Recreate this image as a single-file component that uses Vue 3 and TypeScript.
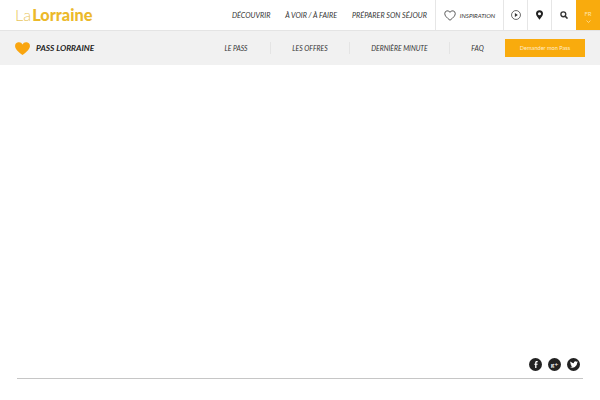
<script setup lang="ts">
const mainLinks: string[] = ['Découvrir', 'À voir / à faire', 'Préparer son séjour']
const subLinks: string[] = ['Le Pass', 'Les offres', 'Dernière minute', 'FAQ']
</script>

<template>
  <div class="page">
    <header class="top">
      <div class="logo"><span class="la">La</span><span class="lorraine">Lorraine</span></div>
      <nav class="main-nav">
        <a v-for="l in mainLinks" :key="l" class="main-link">{{ l }}</a>
      </nav>
      <div class="cell inspi">
        <svg width="12" height="11" viewBox="0 0 24 22" fill="none" stroke="#333" stroke-width="1.600"><path d="M12 20.500C5 15 1.500 11.500 1.500 7A5.500 5.500 0 0 1 12 4.800 5.500 5.500 0 0 1 22.500 7c0 4.500-3.500 8-10.500 13.500z"/></svg>
        <span>Inspiration</span>
      </div>
      <div class="cell icon">
        <svg width="10" height="10" viewBox="0 0 22 22"><circle cx="11" cy="11" r="9.800" fill="none" stroke="#333" stroke-width="1.600"/><path d="M8.500 6.500l6.500 4.500-6.500 4.500z" fill="#333"/></svg>
      </div>
      <div class="cell icon">
        <svg width="7" height="10" viewBox="0 0 16 22"><path fill-rule="evenodd" d="M8 0a8 8 0 0 1 8 8c0 5-5 9-8 14-3-5-8-9-8-14a8 8 0 0 1 8-8zm0 4.500a3.500 3.500 0 1 0 0 7 3.500 3.500 0 0 0 0-7z" fill="#222"/></svg>
      </div>
      <div class="cell icon wide">
        <svg width="8" height="8" viewBox="0 0 18 18" fill="none" stroke="#333"><circle cx="7.500" cy="7.500" r="5.500" stroke-width="3"/><path d="M11.500 11.500L17 17" stroke-width="3.500"/></svg>
      </div>
      <div class="lang">
        <span>FR</span>
        <svg width="5" height="3" viewBox="0 0 10 6" fill="none" stroke="#ffe3a8" stroke-width="1.500"><path d="M1 1l4 4 4-4"/></svg>
      </div>
    </header>

    <div class="sub">
      <div class="brand">
        <svg width="15" height="13" viewBox="0 0 24 21"><path d="M12 21C4 15 0 11 0 6.500A6.300 6.300 0 0 1 12 4 6.300 6.300 0 0 1 24 6.500C24 11 20 15 12 21z" fill="#f9a50f"/></svg>
        <span>Pass Lorraine</span>
      </div>
      <nav class="sub-nav">
        <a v-for="l in subLinks" :key="l" class="sub-link">{{ l }}</a>
      </nav>
      <a class="cta">Demander mon Pass</a>
    </div>

    <main class="content"></main>

    <footer class="foot">
      <div class="social">
        <span class="dot">
          <svg width="4" height="7" viewBox="0 0 7 12"><path d="M2 12V6.500H.5V4.500H2V3c0-2 1-3 2.800-3H6.500v2H5.300c-.8 0-1 .4-1 1v1.500h2.200l-.3 2H4.300V12z" fill="#fff"/></svg>
        </span>
        <span class="dot gplus">g+</span>
        <span class="dot">
          <svg width="8" height="7" viewBox="0 0 24 20"><path d="M24 2.400a10 10 0 0 1-2.800.8A5 5 0 0 0 23.300.5a10 10 0 0 1-3.100 1.200 4.900 4.900 0 0 0-8.400 4.500A14 14 0 0 1 1.700.9 4.900 4.900 0 0 0 3.200 7.500 4.900 4.900 0 0 1 1 6.900a4.900 4.900 0 0 0 3.900 4.900 5 5 0 0 1-2.200.1 4.900 4.900 0 0 0 4.600 3.400A9.900 9.900 0 0 1 0 17.400 14 14 0 0 0 21.500 5c1-.7 1.900-1.600 2.500-2.600z" fill="#fff"/></svg>
        </span>
      </div>
      <div class="rule"></div>
    </footer>
  </div>
</template>

<style>
html, body { margin: 0; background: #fff; overflow: hidden; }
</style>

<style scoped>
.page {
  width: 600px;
  height: 400px;
  display: flex;
  flex-direction: column;
  font-family: "Lato", "Liberation Sans", sans-serif;
  color: #333;
  overflow: hidden;
}
.top {
  height: 30px;
  display: flex;
  align-items: stretch;
  background: #fff;
  border-bottom: 1px solid #e4e4e4;
}
.logo {
  padding-left: 15px;
  width: 217px;
  flex: none;
  font-size: 16.300px;
  line-height: 29px;
  color: #ecb92a;
  white-space: nowrap;
}
.la { font-weight: 300; color: #e9c65d; margin-right: 1px; }
.lorraine { font-weight: 900; }
.main-nav {
  display: flex;
  align-items: center;
  justify-content: space-between;
  flex: none;
  width: 195px;
  margin-right: 8px;
}
.main-link {
  font-size: 7.200px;
  font-style: italic;
  text-transform: uppercase;
  white-space: nowrap;
}
.cell {
  display: flex;
  align-items: center;
  justify-content: center;
  border-left: 1px solid #e6e6e6;
  box-sizing: border-box;
}
.inspi {
  width: 68px;
  gap: 4px;
  font-size: 6.200px;
  font-style: italic;
  text-transform: uppercase;
}
.icon { width: 24px; }
.wide { width: 25px; }
.lang {
  width: 24px;
  background: #f9ab0d;
  color: #ffe3a8;
  display: flex;
  flex-direction: column;
  align-items: center;
  justify-content: center;
  gap: 3px;
  font-size: 6px;
  padding-top: 3px;
  box-sizing: border-box;
}
.sub {
  height: 34px;
  display: flex;
  align-items: center;
  background: #f1f1f1;
}
.brand {
  margin-left: 15px;
  width: 187px;
  flex: none;
  display: flex;
  align-items: center;
  gap: 6px;
  font-size: 8.300px;
  font-style: italic;
  font-weight: 700;
  text-transform: uppercase;
  color: #222;
}
.sub-nav {
  display: grid;
  grid-template-columns: 68px 79px 100px 56px;
  flex: none;
  align-items: center;
}
.sub-link {
  font-size: 6.800px;
  font-style: italic;
  text-transform: uppercase;
  text-align: center;
  white-space: nowrap;
  line-height: 12px;
  border-left: 1px solid #e4e4e4;
}
.sub-link:first-child { border-left: none; }
.cta {
  width: 80px;
  height: 18px;
  background: #f9ab0d;
  color: #ffeccb;
  font-size: 5.600px;
  line-height: 18px;
  text-align: center;
  white-space: nowrap;
}
.content { flex: 1; }
.foot {
  display: flex;
  flex-direction: column;
  padding: 0 17px 21px 17px;
}
.social {
  display: flex;
  justify-content: flex-end;
  gap: 6px;
  margin-bottom: 7px;
  padding-right: 3px;
}
.dot {
  width: 13px;
  height: 13px;
  border-radius: 50%;
  background: #222;
  color: #fff;
  display: flex;
  align-items: center;
  justify-content: center;
}
.gplus { font-size: 7px; font-weight: 700; font-family: "Liberation Serif", serif; }
.rule { height: 1px; background: #c6c6c6; }
</style>
